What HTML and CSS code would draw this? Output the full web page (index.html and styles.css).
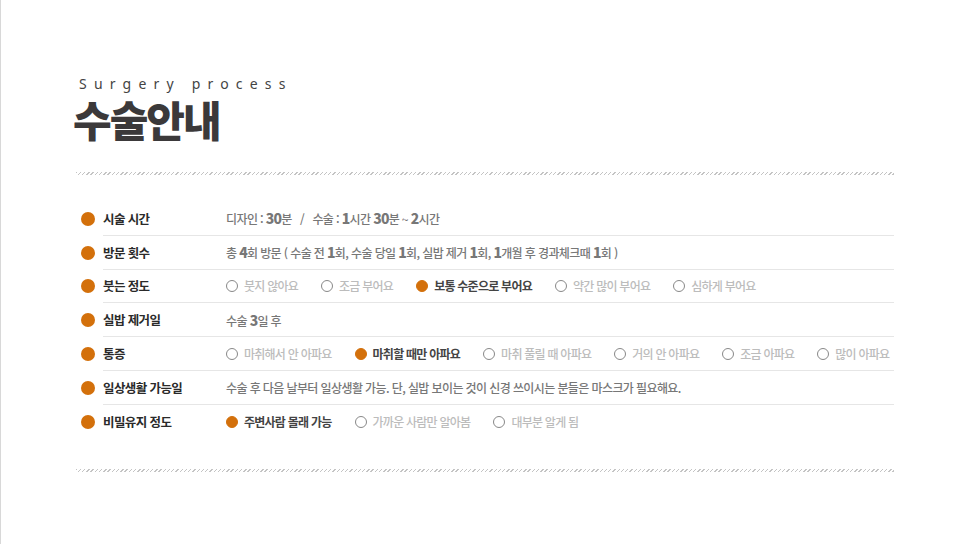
FILE: index.html
```html
<!DOCTYPE html>
<html lang="ko">
<head>
<meta charset="utf-8">
<link rel="stylesheet" href="styles.css">
</head>
<body>
<div class="page">
  <header class="head">
    <p class="eng">Surgery process</p>
    <h1 class="title">수술안내</h1>
  </header>
  <div class="hatch"></div>
  <ul class="list">
    <li class="row">
      <span class="dot"></span>
      <div class="line">
        <span class="label">시술 시간</span>
        <span class="value">디자인 : <b>30</b>분 &nbsp;&nbsp;/&nbsp;&nbsp; 수술 : <b>1</b>시간 <b>30</b>분 ~ <b>2</b>시간</span>
      </div>
    </li>
    <li class="row">
      <span class="dot"></span>
      <div class="line">
        <span class="label">방문 횟수</span>
        <span class="value">총 <b>4</b>회 방문 ( 수술 전 <b>1</b>회, 수술 당일 <b>1</b>회, 실밥 제거 <b>1</b>회, <b>1</b>개월 후 경과체크때 <b>1</b>회 )</span>
      </div>
    </li>
    <li class="row">
      <span class="dot"></span>
      <div class="line">
        <span class="label">붓는 정도</span>
        <span class="opts">
          <span class="opt">붓지 않아요</span>
          <span class="opt">조금 부어요</span>
          <span class="opt on">보통 수준으로 부어요</span>
          <span class="opt">약간 많이 부어요</span>
          <span class="opt">심하게 부어요</span>
        </span>
      </div>
    </li>
    <li class="row">
      <span class="dot"></span>
      <div class="line">
        <span class="label">실밥 제거일</span>
        <span class="value">수술 <b>3</b>일 후</span>
      </div>
    </li>
    <li class="row">
      <span class="dot"></span>
      <div class="line">
        <span class="label">통증</span>
        <span class="opts">
          <span class="opt">마취해서 안 아파요</span>
          <span class="opt on">마취할 때만 아파요</span>
          <span class="opt">마취 풀릴 때 아파요</span>
          <span class="opt">거의 안 아파요</span>
          <span class="opt">조금 아파요</span>
          <span class="opt">많이 아파요</span>
        </span>
      </div>
    </li>
    <li class="row">
      <span class="dot"></span>
      <div class="line">
        <span class="label">일상생활 가능일</span>
        <span class="value">수술 후 다음 날부터 일상생활 가능. 단, 실밥 보이는 것이 신경 쓰이시는 분들은 마스크가 필요해요.</span>
      </div>
    </li>
    <li class="row">
      <span class="dot"></span>
      <div class="line last">
        <span class="label">비밀유지 정도</span>
        <span class="opts">
          <span class="opt on">주변사람 몰래 가능</span>
          <span class="opt">가까운 사람만 알아봄</span>
          <span class="opt">대부분 알게 됨</span>
        </span>
      </div>
    </li>
  </ul>
  <div class="hatch"></div>
</div>
</body>
</html>
```

FILE: styles.css
```css
* { box-sizing: border-box; }
html, body { margin: 0; padding: 0; background: #fff; }
body {
  font-family: "Noto Sans CJK KR", "Noto Sans", sans-serif;
  color: #333;
  width: 963px;
  height: 544px;
  overflow: hidden;
}
.page {
  height: 544px;
  border-left: 1px solid #d8d8d8;
  padding: 0 69px 0 75px;
}
.head { padding-top: 75px; height: 172px; }
.eng {
  margin: 0 0 0 3px;
  font-family: "Noto Sans", sans-serif;
  font-size: 14px;
  line-height: 18px;
  letter-spacing: 7.2px;
  color: #444;
}
.title {
  margin: 4px 0 0 -3px;
  font-size: 42px;
  line-height: 44px;
  font-weight: 900;
  letter-spacing: -2px;
  color: #3b393a;
}
.hatch {
  height: 3px;
  background: repeating-linear-gradient(135deg, #c4c4c4 0 1px, transparent 1px 3px);
}
.list { list-style: none; margin: 27px 0 30px; padding: 0; }
.row { display: flex; align-items: center; height: 33.8px; }
.dot {
  width: 14px; height: 14px; border-radius: 50%;
  background: #d3700b;
  margin: 0 8px 0 5px;
  flex: none;
}
.line {
  flex: 1;
  height: 100%;
  display: flex;
  align-items: center;
  border-bottom: 1px solid #e6e6e6;
}
.line.last { border-bottom: none; }
.label {
  width: 123px;
  flex: none;
  font-size: 12.5px;
  font-weight: 700;
  color: #2a2a2a;
  letter-spacing: -0.6px;
}
.value {
  font-size: 12px;
  font-weight: 500;
  color: #777;
  letter-spacing: -0.6px;
  white-space: nowrap;
}
.value b { font-weight: 800; font-size: 14px; color: #777; letter-spacing: -0.8px; }
.opts { display: flex; gap: 23px; font-size: 12px; letter-spacing: -0.75px; white-space: nowrap; }
.opt { display: flex; align-items: center; color: #bcbcbc; font-weight: 500; }
.opt::before {
  content: "";
  width: 10px; height: 10px;
  border: 1px solid #888;
  border-radius: 50%;
  margin-right: 6px;
  flex: none;
}
.opt.on { color: #444; font-weight: 700; }
.opt.on::before { background: #d3700b; border-color: #d3700b; }
```
